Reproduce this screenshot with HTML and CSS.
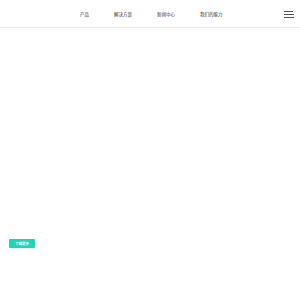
FILE: index.html
```html
<!DOCTYPE html>
<html lang="zh">
<head>
<meta charset="utf-8">
<link rel="stylesheet" href="styles.css">
</head>
<body>
<header class="header">
  <nav class="nav">
    <a class="nav-item">产品</a>
    <a class="nav-item">解决方案</a>
    <a class="nav-item">新闻中心</a>
    <a class="nav-item">我们的能力</a>
  </nav>
  <div class="menu">
    <span class="bar bar-short"></span>
    <span class="bar"></span>
    <span class="bar"></span>
  </div>
</header>
<main class="hero">
  <a class="btn">了解更多</a>
</main>
</body>
</html>
```
FILE: styles.css
```css
* { box-sizing: border-box; }
html, body { margin: 0; padding: 0; background: #fff; }
body {
  width: 300px;
  height: 300px;
  font-family: "Noto Sans CJK SC", "Noto Sans", sans-serif;
  overflow: hidden;
}
.header {
  height: 28px;
  border-bottom: 1px solid #ececec;
  display: flex;
  align-items: center;
  padding: 1px 6px 0 80px;
}
.nav {
  display: flex;
  align-items: center;
  gap: 25px;
  flex: 1;
}
.nav-item {
  font-size: 4.5px;
  color: #333;
  line-height: 1;
}
.menu {
  width: 10px;
  display: flex;
  flex-direction: column;
  gap: 2px;
  align-items: flex-start;
}
.bar {
  display: block;
  width: 10px;
  height: 1px;
  background: #555;
}
.bar-short { width: 9px; }
.hero {
  height: 271px;
  display: flex;
  align-items: flex-end;
  padding: 0 0 51px 9px;
}
.btn {
  width: 26px;
  height: 9.5px;
  background: #1dd6b6;
  border-radius: 1px;
  color: #fff;
  font-size: 3.5px;
  font-weight: 700;
  display: flex;
  align-items: center;
  justify-content: center;
  line-height: 1;
}
```
